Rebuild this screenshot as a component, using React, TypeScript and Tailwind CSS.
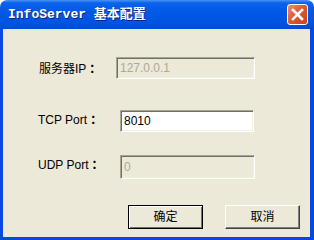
import React from "react";

const cjk = "font-['Liberation_Sans','Noto_Sans_CJK_SC',sans-serif]";

const inputBase =
  "h-[22px] border border-t-[#a7a596] border-l-[#a7a596] border-b-white border-r-white shadow-[inset_1px_1px_0_#716f64,inset_-1px_-1px_0_#f1efe2] px-[3px] text-[12px] leading-none flex items-center";

const Colon = () => <span className="ml-[3px] font-bold">：</span>;

export default function App() {
  return (
    <div className={`w-[314px] h-[240px] flex flex-col bg-white ${cjk}`}>
      {/* title bar */}
      <div className="h-[29px] flex items-center justify-between rounded-t-[7px] pl-[8px] pr-[6px] bg-[linear-gradient(to_bottom,#4a93f7_0%,#0b62ea_10%,#0058e6_45%,#0053e2_80%,#0049d6_100%)]">
        <span className="text-white font-bold text-[13px] font-['Liberation_Mono','Noto_Sans_CJK_SC',monospace] [text-shadow:1px_1px_0_#0c2480] mt-[1px]">
          InfoServer 基本配置
        </span>
        <div className="w-[21px] h-[21px] rounded-[3px] border border-white bg-[linear-gradient(135deg,#f0906c_0%,#dd5a32_45%,#c8421c_100%)] flex items-center justify-center">
          <svg width="13" height="13" viewBox="0 0 13 13">
            <path d="M2 2 L11 11 M11 2 L2 11" stroke="white" strokeWidth="2.6" strokeLinecap="square" />
          </svg>
        </div>
      </div>

      {/* frame + body */}
      <div className="flex-1 flex bg-[#0848de] pl-[3px] pr-[4px] pb-[3px]">
        <div className="flex-1 bg-[#ece9d8] flex flex-col text-[12px] text-black">
          <div className="flex items-center mt-[28px] pl-[36px]">
            <span className="w-[77px] pt-[2px]">服务器IP<Colon /></span>
            <div className={`${inputBase} w-[139px] bg-[#ece9d8] text-[#aca899]`}>127.0.0.1</div>
          </div>

          <div className="flex items-start mt-[31px] pl-[35px]">
            <span className="w-[82px] pt-[1px]">TCP Port<Colon /></span>
            <div className={`${inputBase} w-[134px] bg-white text-black`}>8010</div>
          </div>

          <div className="flex items-start mt-[23px] pl-[35px]">
            <span className="w-[82px] pt-[1px]">UDP Port<Colon /></span>
            <div className={`${inputBase} h-[24px] w-[135px] bg-[#ece9d8] text-[#aca899]`}>0</div>
          </div>

          <div className="flex mt-[26px] pl-[125px] gap-[22px]">
            <button className="w-[75px] h-[24px] border border-black bg-[#ece9d8] shadow-[inset_1px_1px_0_white,inset_-1px_-1px_0_#716f64] text-[12px] flex items-center justify-center">
              确定
            </button>
            <button className="w-[75px] h-[24px] bg-[#ece9d8] border border-t-white border-l-white border-b-[#404040] border-r-[#404040] shadow-[inset_-1px_-1px_0_#808080] text-[12px] flex items-center justify-center">
              取消
            </button>
          </div>
        </div>
      </div>
    </div>
  );
}
